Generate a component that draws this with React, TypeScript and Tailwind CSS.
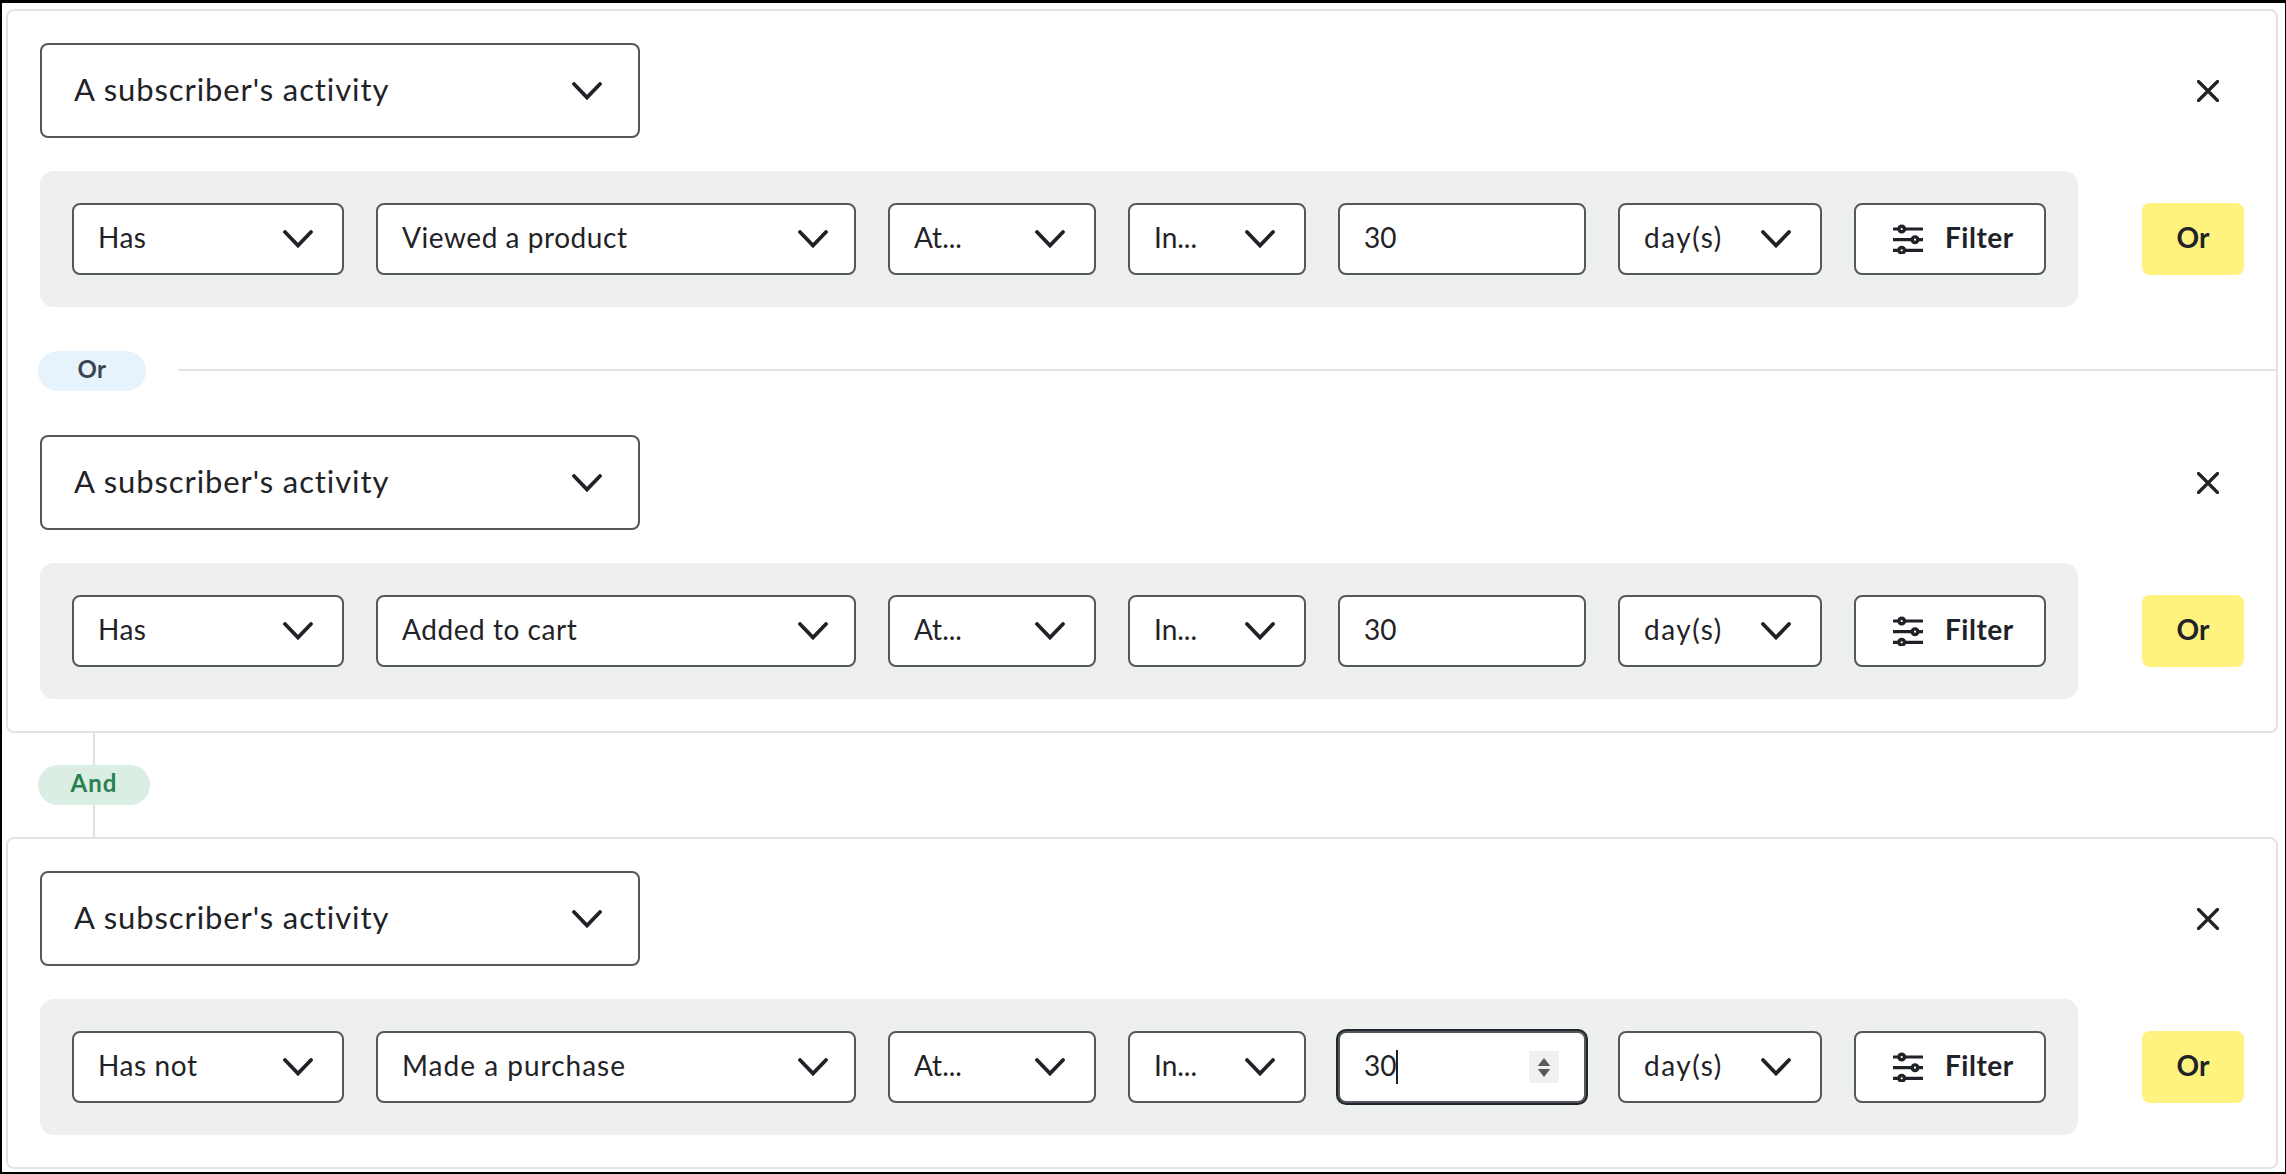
import React from "react";

const font = "[font-family:'Lato','Noto_Sans',sans-serif]";

function Chevron() {
  return (
    <svg viewBox="0 0 30 18" className="w-[30px] h-[18px] shrink-0" fill="none">
      <path d="M2 2 L15 15.5 L28 2" stroke="#1f2328" strokeWidth="3.8" strokeLinecap="round" strokeLinejoin="miter" />
    </svg>
  );
}

function Close() {
  return (
    <svg viewBox="0 0 22 22" className="w-[22px] h-[22px] mr-[25px]" fill="none">
      <path d="M1.5 1.5 L20.5 20.5 M20.5 1.5 L1.5 20.5" stroke="#1f2328" strokeWidth="3.2" strokeLinecap="round" />
    </svg>
  );
}

function Sliders() {
  return (
    <svg viewBox="0 0 30 30" className="w-[30px] h-[30px] shrink-0" fill="none">
      <path d="M0 5 H30 M0 15.7 H30 M0 26.3 H30" stroke="#1f2328" strokeWidth="3.2" />
      <circle cx="8.7" cy="5" r="2.8" fill="#fff" stroke="#1f2328" strokeWidth="3.4" />
      <circle cx="22" cy="15.7" r="2.8" fill="#fff" stroke="#1f2328" strokeWidth="3.4" />
      <circle cx="8.7" cy="26.3" r="2.8" fill="#fff" stroke="#1f2328" strokeWidth="3.4" />
    </svg>
  );
}

function Select({ label, width, tracking, right = "pr-[29px]" }: { label: string; width: string; tracking: string; right?: string }) {
  return (
    <div className={`${width} ${right} h-[72px] shrink-0 bg-white border-2 border-[#54575b] rounded-[8px] flex items-center justify-between pl-[24px]`}>
      <span className={`${tracking} text-[28px] leading-none pb-[4px] text-[#1f2328] whitespace-nowrap`}>{label}</span>
      <Chevron />
    </div>
  );
}

function NumberInput({ focused }: { focused?: boolean }) {
  return (
    <div className={`w-[248px] h-[72px] shrink-0 bg-white border-2 border-[#54575b] rounded-[8px] flex items-center justify-between pl-[24px] ${focused ? "ring-2 ring-[#22252a] pr-[25px]" : ""}`}>
      <span className="flex items-center text-[28px] leading-none text-[#1f2328]">
        <span className="pb-[4px]">30</span>
        {focused && <span className="w-[2px] h-[34px] bg-[#1f2328]" />}
      </span>
      {focused && (
        <span className="w-[30px] h-[32px] bg-[#f0f0f0] rounded-[2px] flex flex-col items-center justify-center gap-[3px]">
          <svg viewBox="0 0 14 9" className="w-[14px] h-[8px]"><path d="M7 0 L14 9 H0 Z" fill="#57595c" /></svg>
          <svg viewBox="0 0 14 9" className="w-[14px] h-[8px]"><path d="M7 9 L14 0 H0 Z" fill="#57595c" /></svg>
        </span>
      )}
    </div>
  );
}

function Condition({ action, actionTracking, event, eventTracking, focused }: { action: string; actionTracking: string; event: string; eventTracking: string; focused?: boolean }) {
  return (
    <div className="flex flex-col gap-[33px]">
      <div className="flex items-center justify-between">
        <div className="w-[600px] h-[95px] bg-white border-2 border-[#54575b] rounded-[8px] flex items-center justify-between pl-[32px] pr-[36px]">
          <span className="text-[31px] tracking-[0.9px] leading-none pb-[3px] text-[#1f2328] whitespace-nowrap">A subscriber's activity</span>
          <Chevron />
        </div>
        <Close />
      </div>
      <div className="flex items-center">
        <div className="flex-1 h-[136px] bg-[#eef0ef] rounded-[14px] px-[32px] flex items-center gap-[32px]">
          <Select label={action} width="w-[272px]" tracking={actionTracking} />
          <Select label={event} width="w-[480px]" tracking={eventTracking} right="pr-[26px]" />
          <Select label="At..." width="w-[208px]" tracking="tracking-normal" />
          <Select label="In..." width="w-[178px]" tracking="tracking-normal" />
          <NumberInput focused={focused} />
          <Select label="day(s)" width="w-[204px]" tracking="tracking-[1.5px]" />
          <div className="w-[192px] h-[72px] shrink-0 bg-white border-2 border-[#54575b] rounded-[8px] flex items-center pl-[37px] gap-[22px]">
            <Sliders />
            <span className="text-[28px] tracking-[0.5px] leading-none pb-[4px] font-bold text-[#1f2328]">Filter</span>
          </div>
        </div>
        <div className="ml-[64px] w-[102px] h-[72px] shrink-0 bg-[#fff27f] rounded-[8px] flex items-center justify-center text-[28px] leading-none pb-[4px] font-bold text-[#1f2328]">
          Or
        </div>
      </div>
    </div>
  );
}

export default function App() {
  return (
    <div className={`h-[1174px] bg-black pt-[3px] pl-[2px] pr-[1px] pb-[2px] ${font}`}>
      <div className="h-full bg-white pt-[6px] pl-[4px] pr-[7px]">
        <div className="border-2 border-[#e3e3e3] rounded-[8px] p-[32px]">
          <Condition action="Has" actionTracking="tracking-[0.5px]" event="Viewed a product" eventTracking="tracking-[0.55px]" />
          <div className="flex items-center h-[128px] -mr-[32px] -ml-[2px]">
            <div className="w-[108px] h-[40px] rounded-full bg-[#e6f2fc] flex items-center justify-center text-[24px] tracking-[0.5px] leading-none pb-[4px] font-bold text-[#3a4650]">
              Or
            </div>
            <div className="flex-1 h-[2px] mb-[2px] bg-[#e3e3e3] ml-[32px]" />
          </div>
          <Condition action="Has" actionTracking="tracking-[0.5px]" event="Added to cart" eventTracking="tracking-[0.55px]" />
        </div>
        <div className="flex flex-col items-center w-[112px] ml-[32px] h-[104px]">
          <div className="w-[2px] h-[32px] bg-[#e3e3e3]" />
          <div className="w-[112px] h-[40px] shrink-0 rounded-full bg-[#daeee4] flex items-center justify-center text-[24px] tracking-[1px] leading-none pb-[4px] font-bold text-[#2a8050]">
            And
          </div>
          <div className="w-[2px] h-[32px] bg-[#e3e3e3]" />
        </div>
        <div className="border-2 border-[#e3e3e3] rounded-[8px] p-[32px]">
          <Condition action="Has not" actionTracking="tracking-[0.6px]" event="Made a purchase" eventTracking="tracking-[1px]" focused />
        </div>
      </div>
    </div>
  );
}
